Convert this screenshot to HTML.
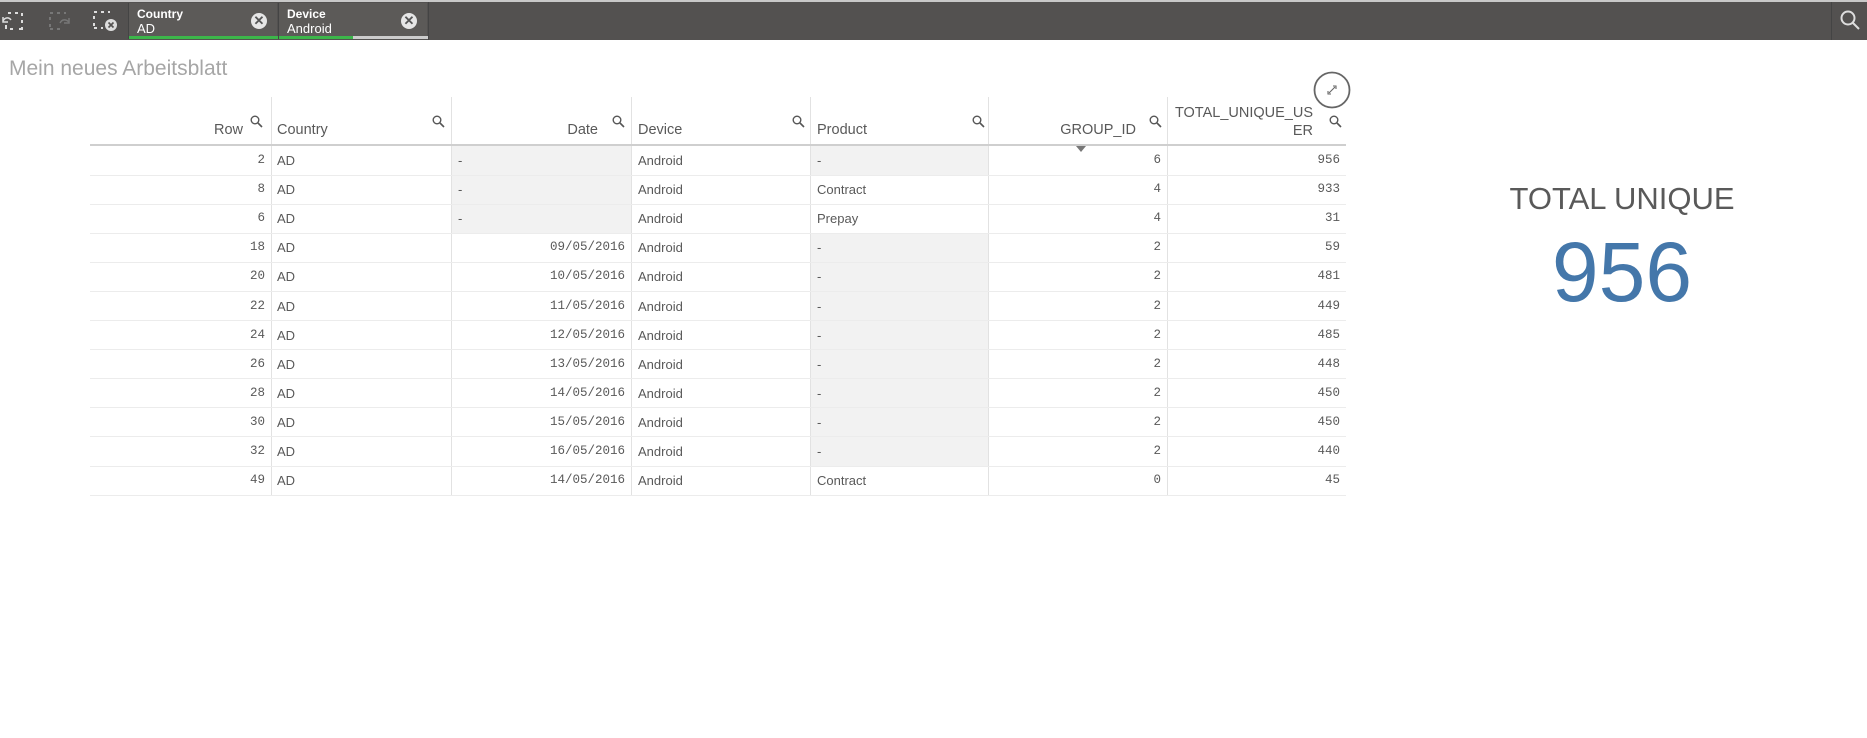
<!DOCTYPE html>
<html><head><meta charset="utf-8"><style>
*{margin:0;padding:0;box-sizing:border-box}
body{width:1867px;height:738px;background:#fff;position:relative;overflow:hidden;font-family:"Liberation Sans",sans-serif;color:#595959}
.bar{position:absolute;left:0;top:0;width:1867px;height:40px;background:#535150;border-top:2px solid #c8c8c8}
.chip{position:absolute;top:1px;height:36px;background:#5c5a58;color:#fff;border-left:1px solid #444}
.chip .l{position:absolute;left:8px;top:4px;font-size:12px;font-weight:bold}
.chip .v{position:absolute;left:8px;top:18px;font-size:13px}
.chip .x{position:absolute;right:10px;top:10px;width:16px;height:16px;border-radius:50%;background:#e6e6e6;color:#555;font-size:13px;line-height:16px;text-align:center;font-weight:bold}
.chip .g{position:absolute;left:0;bottom:0;height:3px;background:#3cb64a}
.title{position:absolute;left:9px;top:57px;font-size:21px;color:#a6a6a6}
.col{position:absolute;top:97px;height:398px;border-left:1px solid #e2e2e2}
.hd{position:absolute;font-size:14.5px;color:#595959}
.hdline{position:absolute;left:90px;top:144px;width:1256px;height:2px;background:#cfcfcf}
.row{position:absolute;left:90px;width:1256px;height:1px;background:#ececec}
.c{position:absolute;font-size:13px;height:29px;line-height:29px;padding:0 6px;font-family:"Liberation Sans",sans-serif;color:#595959}
.n{font-family:"Liberation Mono",monospace;font-size:12.5px;text-align:right}
.gray{position:absolute;background:#f2f2f2}
.mag{position:absolute;width:13px;height:13px}
</style></head><body>
<div class="bar">
 <svg style="position:absolute;left:2px;top:9px" width="24" height="20" viewBox="0 0 24 20" fill="none" stroke="#ddd" stroke-width="2"><path d="M6 2h3M13 2h3M20 2v3M20 9v3M20 16v2h-3M11 18H8M4 14v4" /><path d="M1 10c2-4 6-4 8-1" stroke-width="1.5"/><path d="M1 6v5h5" stroke-width="1.5"/></svg>
 <svg style="position:absolute;left:48px;top:9px" width="24" height="20" viewBox="0 0 24 20" fill="none" stroke="#777" stroke-width="2"><path d="M2 2h3M9 2h3M2 6v3M2 13v3M2 18h3M9 18h3M16 2h2"/><path d="M12 12c2-4 6-4 9-1" stroke-width="1.5"/><path d="M21 7v5h-5" stroke-width="1.5"/></svg>
 <svg style="position:absolute;left:92px;top:8px" width="26" height="22" viewBox="0 0 26 22" fill="none" stroke="#ddd" stroke-width="2"><path d="M2 2h3M9 2h3M16 2h2M2 6v3M2 13v3M2 18h3M9 18h2"/><circle cx="19" cy="15" r="6" fill="#ddd" stroke="none"/><path d="M16.5 12.5l5 5M21.5 12.5l-5 5" stroke="#535150" stroke-width="1.6"/></svg>
 <div class="chip" style="left:128px;width:149px"><div class="l">Country</div><div class="v">AD</div><div class="x">✕</div><div class="g" style="width:149px"></div></div>
 <div class="chip" style="left:278px;width:149px"><div class="l">Device</div><div class="v">Android</div><div class="x">✕</div><div class="g" style="width:74px"></div><div class="g" style="left:74px;width:75px;background:#ccc"></div></div>
 <div style="position:absolute;left:428px;top:0;width:1px;height:38px;background:#444"></div>
 <div style="position:absolute;left:1831px;top:0;width:1px;height:38px;background:#444"></div>
 <svg style="position:absolute;left:1839px;top:7px" width="22" height="22" viewBox="0 0 22 22" fill="none" stroke="#ddd" stroke-width="2"><circle cx="9" cy="9" r="6.5"/><path d="M14 14l6 6"/></svg>
</div>
<div class="title">Mein neues Arbeitsblatt</div>

<div class="gray" style="left:452px;top:146px;width:179px;height:87px"></div>
<div class="gray" style="left:811px;top:146px;width:177px;height:29px"></div>
<div class="gray" style="left:811px;top:233px;width:177px;height:233px"></div>

<div class="col" style="left:271px"></div><div class="col" style="left:451px"></div><div class="col" style="left:631px"></div><div class="col" style="left:810px"></div><div class="col" style="left:988px"></div><div class="col" style="left:1167px"></div>
<div class="hdline"></div>

<div class="hd" style="left:90px;width:153px;text-align:right;top:122px">Row</div>
<div class="hd" style="left:277px;top:122px">Country</div>
<div class="hd" style="left:452px;width:146px;text-align:right;top:122px">Date</div>
<div class="hd" style="left:638px;top:122px">Device</div>
<div class="hd" style="left:817px;top:122px">Product</div>
<div class="hd" style="left:988px;width:148px;text-align:right;top:122px">GROUP_ID</div>
<div class="hd" style="left:1167px;width:146px;text-align:right;top:104px;line-height:18px">TOTAL_UNIQUE_US<br>ER</div>
<svg style="position:absolute;left:1076px;top:146px" width="10" height="6"><path d="M0 0h10L5 6z" fill="#777"/></svg>
<svg width="0" height="0"><defs><symbol id="m" viewBox="0 0 13 13"><circle cx="5" cy="5" r="3.8" fill="none" stroke="#555" stroke-width="1.4"/><path d="M8 8l4 4" stroke="#555" stroke-width="1.6"/></symbol></defs></svg>
<svg class="mag" style="left:250px;top:115px"><use href="#m"/></svg>
<svg class="mag" style="left:432px;top:115px"><use href="#m"/></svg>
<svg class="mag" style="left:612px;top:115px"><use href="#m"/></svg>
<svg class="mag" style="left:792px;top:115px"><use href="#m"/></svg>
<svg class="mag" style="left:972px;top:115px"><use href="#m"/></svg>
<svg class="mag" style="left:1149px;top:115px"><use href="#m"/></svg>
<svg class="mag" style="left:1329px;top:115px"><use href="#m"/></svg>

<svg style="position:absolute;left:1313px;top:71px" width="38" height="38"><circle cx="19" cy="19" r="17.5" fill="#fff" stroke="#666" stroke-width="1.8"/><path d="M16 22l6-6M20 15h3v3M15 20v3h3" stroke="#666" stroke-width="1.1" fill="none"/></svg>

<div id="t"></div>
<script>
var d=[[2,'-','-',6,956],[8,'-','Contract',4,933],[6,'-','Prepay',4,31],[18,'09/05/2016','-',2,59],[20,'10/05/2016','-',2,481],[22,'11/05/2016','-',2,449],[24,'12/05/2016','-',2,485],[26,'13/05/2016','-',2,448],[28,'14/05/2016','-',2,450],[30,'15/05/2016','-',2,450],[32,'16/05/2016','-',2,440],[49,'14/05/2016','Contract',0,45]];
var h='';for(var i=0;i<d.length;i++){var y=146+i*29.1,r=d[i];
h+='<div class="c n" style="left:90px;width:181px;top:'+y+'px">'+r[0]+'</div>';
h+='<div class="c" style="left:271px;top:'+y+'px">AD</div>';
h+= r[1]=='-'?'<div class="c" style="left:452px;top:'+y+'px">-</div>':'<div class="c n" style="left:452px;width:179px;top:'+y+'px">'+r[1]+'</div>';
h+='<div class="c" style="left:632px;top:'+y+'px">Android</div>';
h+='<div class="c" style="left:811px;top:'+y+'px">'+r[2]+'</div>';
h+='<div class="c n" style="left:988px;width:179px;top:'+y+'px">'+r[3]+'</div>';
h+='<div class="c n" style="left:1167px;width:179px;top:'+y+'px">'+r[4]+'</div>';
h+='<div class="row" style="top:'+(y+28.5)+'px"></div>';}
document.getElementById('t').innerHTML=h;
</script>
<div style="position:absolute;left:1422px;width:400px;text-align:center;top:181px;font-size:31px;color:#595959">TOTAL UNIQUE</div>
<div style="position:absolute;left:1422px;width:400px;text-align:center;top:224px;font-size:84px;color:#4477aa">956</div>
</body></html>
